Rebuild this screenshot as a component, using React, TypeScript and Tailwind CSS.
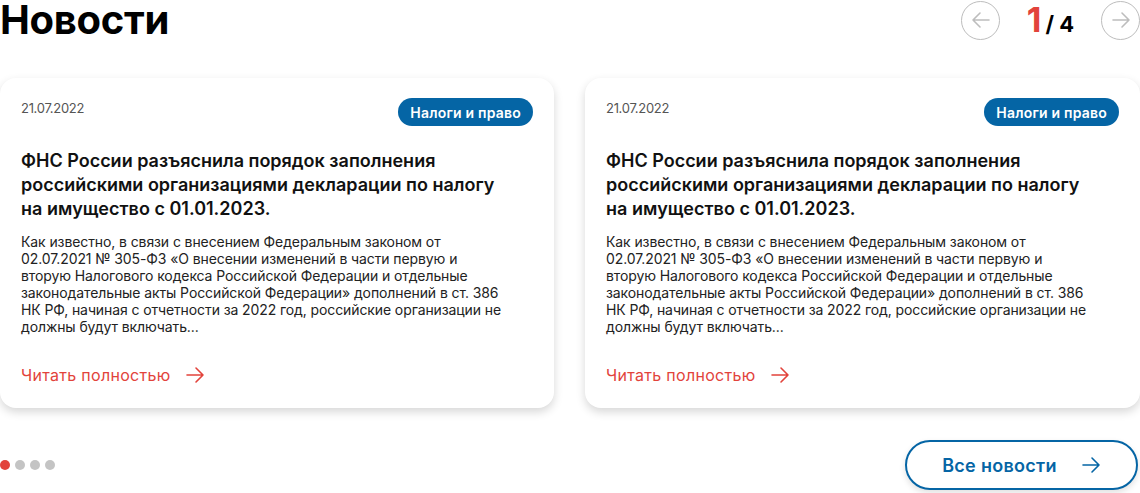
import React from "react";

const Arrow = ({ className = "", size = 20 }: { className?: string; size?: number }) => (
    <svg
        width={size}
        height={size}
        viewBox="0 0 20 20"
        fill="none"
        stroke="currentColor"
        strokeWidth="1.6"
        strokeLinecap="round"
        strokeLinejoin="round"
        className={className}
    >
        <path d="M2 10h16M11 3l7 7-7 7" />
    </svg>
);

const NewsCard = () => {
    return (
        <div className="bg-white rounded-[16px] shadow-[0_4px_10px_rgba(0,0,0,0.16)] h-[330px] px-[21px] pt-[20px] flex flex-col">
            <div className="flex justify-between items-start">
                <span className="text-[13px] text-[#555] mt-[1px] tracking-[-0.3px]">21.07.2022</span>
                <span className="h-[28px] px-[12px] rounded-full bg-[#0565a5] text-white text-[14px] font-semibold tracking-[0.2px] flex items-center">
                    Налоги и право
                </span>
            </div>
            <h3 className="mt-[23px] text-[18px] leading-[24px] font-semibold text-[#111] w-[490px]">
                ФНС России разъяснила порядок заполнения российскими организациями декларации по
                налогу на имущество с 01.01.2023.
            </h3>
            <p className="mt-[12px] text-[14px] leading-[17px] text-[#222] w-[512px] tracking-[-0.1px]">
                Как известно, в связи с внесением Федеральным законом от
                <br />
                02.07.2021 № 305-ФЗ «О внесении изменений в части первую и
                <br />
                вторую Налогового кодекса Российской Федерации и отдельные
                <br />
                законодательные акты Российской Федерации» дополнений в ст. 386
                <br />
                НК РФ, начиная с отчетности за 2022 год, российские организации не
                <br />
                должны будут включать...
            </p>
            <a className="mt-[28px] flex items-center gap-[14px] text-[16px] leading-[24px] tracking-[0.3px] text-[#e2433b]">
                Читать полностью
                <Arrow size={20} />
            </a>
        </div>
    );
};

const App = () => {
    return (
        <div className="w-[1140px] h-[493px] bg-white overflow-hidden font-['Inter',sans-serif] flex flex-col">
            <div className="flex justify-between items-start h-[40px]">
                <h1 className="text-[40px] leading-[40px] font-bold text-black tracking-[-0.3px]">Новости</h1>
                <div className="flex items-center h-[40px]">
                    <button className="w-[39px] h-[39px] rounded-full border-[1.5px] border-[#bdbdbd] text-[#bdbdbd] flex items-center justify-center">
                        <Arrow size={20} className="rotate-180" />
                    </button>
                    <div className="w-[101px] flex items-baseline justify-center font-bold pt-[2px]">
                        <span className="text-[34px] leading-[38px] text-[#e2433b]">1</span>
                        <span className="text-[22px] text-black ml-[4px]">/ 4</span>
                    </div>
                    <button className="w-[39px] h-[39px] rounded-full border-[1.5px] border-[#bdbdbd] text-[#bdbdbd] flex items-center justify-center">
                        <Arrow size={20} />
                    </button>
                </div>
            </div>
            <div className="mt-[38px] grid grid-cols-[554px_555px] gap-[31px]">
                <NewsCard />
                <NewsCard />
            </div>
            <div className="mt-[32px] flex justify-between items-center">
                <div className="flex gap-[5px]">
                    <span className="w-[10px] h-[10px] rounded-full bg-[#e2433b]" />
                    <span className="w-[10px] h-[10px] rounded-full bg-[#c4c4c4]" />
                    <span className="w-[10px] h-[10px] rounded-full bg-[#c4c4c4]" />
                    <span className="w-[10px] h-[10px] rounded-full bg-[#c4c4c4]" />
                </div>
                <button className="mr-[2px] w-[233px] h-[50px] rounded-full border-2 border-[#0565a5] bg-white shadow-[0_3px_6px_rgba(0,0,0,0.12)] flex items-center justify-center gap-[24px] text-[#0565a5] text-[18px] font-semibold tracking-[0.3px]">
                    Все новости
                    <Arrow size={20} />
                </button>
            </div>
        </div>
    );
};

export default App;
